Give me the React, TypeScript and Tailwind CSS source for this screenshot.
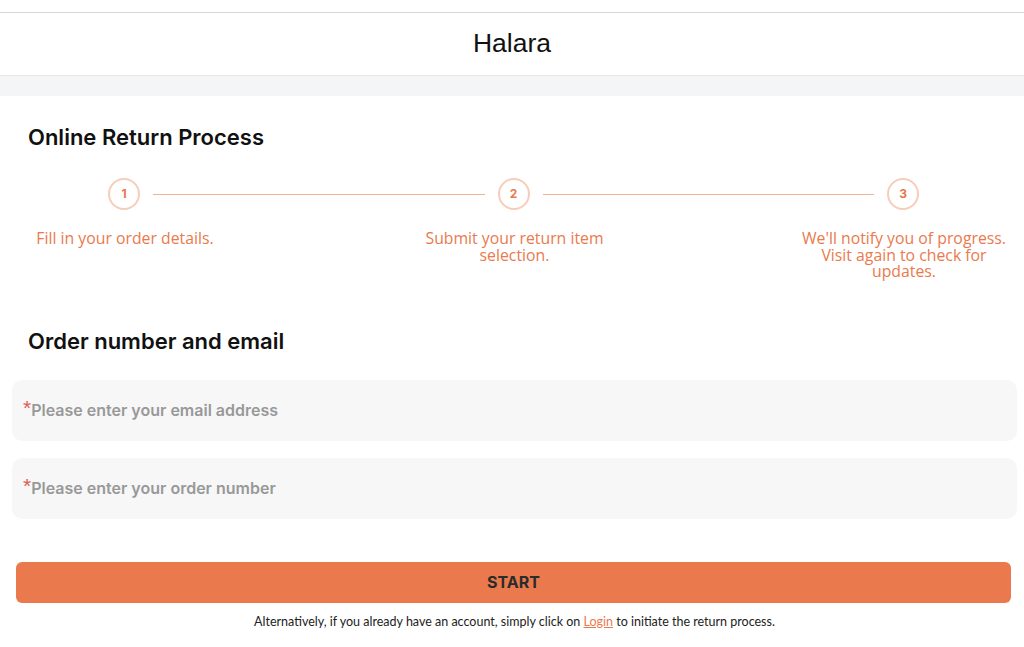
const steps = [
  { n: '1', text: 'Fill in your order details.' },
  { n: '2', text: 'Submit your return item selection.' },
  { n: '3', text: "We'll notify you of progress. Visit again to check for updates." },
];

function Circle({ n }: { n: string }) {
  return (
    <span className="flex size-[32px] shrink-0 items-center justify-center rounded-full border-2 border-[#f6cdb9] font-['Inter',sans-serif] text-[12px] font-bold text-[#e8774a]">
      {n}
    </span>
  );
}

function Field({ placeholder }: { placeholder: string }) {
  return (
    <div className="flex h-[61px] items-center rounded-[10px] bg-[#f7f7f7] pl-[11px]">
      <span className="mb-[6px] font-['Liberation_Sans',sans-serif] text-[21px] leading-none text-[#e05a4f]">*</span>
      <input
        className="w-full bg-transparent font-['Inter',sans-serif] text-[16px] font-semibold text-[#999] outline-none placeholder:text-[#999]"
        placeholder={placeholder}
      />
    </div>
  );
}

export default function App() {
  return (
    <div className="min-h-[647px] bg-white font-['Inter',sans-serif] text-[#111]">
      <div className="h-[13px] border-b border-[#d6d6d6]" />
      <header className="flex h-[63px] items-center justify-center border-b border-[#e6e6e6]">
        <span className="font-['Liberation_Sans',sans-serif] text-[26.5px] text-[#111]">Halara</span>
      </header>
      <div className="h-[20px] bg-[#f4f5f6]" />

      <main className="pl-[12px] pr-[7px]">
        <h2 className="mt-[25px] pl-[16px] text-[22px] font-semibold">Online Return Process</h2>

        <div className="mt-[24px] flex items-center pl-[96px] pr-[98px]">
          {steps.map((s, i) => (
            <div key={s.n} className={i < 2 ? 'flex flex-1 items-center' : 'flex items-center'}>
              <Circle n={s.n} />
              {i < 2 && <span className="mx-[13px] h-px flex-1 bg-[#f3b293]" />}
            </div>
          ))}
        </div>

        <div className="mt-[20px] flex justify-between">
          {steps.map((s) => (
            <p
              key={s.n}
              className="w-[226px] text-center font-['Open_Sans',sans-serif] text-[15.8px] leading-[16.5px] text-[#ea7a4d]"
            >
              {s.text}
            </p>
          ))}
        </div>

        <h2 className="mt-[45px] pl-[16px] text-[22px] font-semibold">Order number and email</h2>

        <div className="mt-[22px] flex flex-col gap-[17px]">
          <Field placeholder="Please enter your email address" />
          <Field placeholder="Please enter your order number" />
        </div>

        <div className="mt-[43px] pl-[4px] pr-[6px]">
          <button className="h-[41px] w-full rounded-[6px] bg-[#ea7a4d] font-['Inter',sans-serif] text-[16px] font-bold text-[#2b2b2b]">
            START
          </button>
        </div>

        <p className="mt-[10px] text-center font-['Lato',sans-serif] text-[12.5px] text-[#222]">
          Alternatively, if you already have an account, simply click on{' '}
          <a className="text-[#ea7a4d] underline">Login</a> to initiate the return process.
        </p>
      </main>
    </div>
  );
}
